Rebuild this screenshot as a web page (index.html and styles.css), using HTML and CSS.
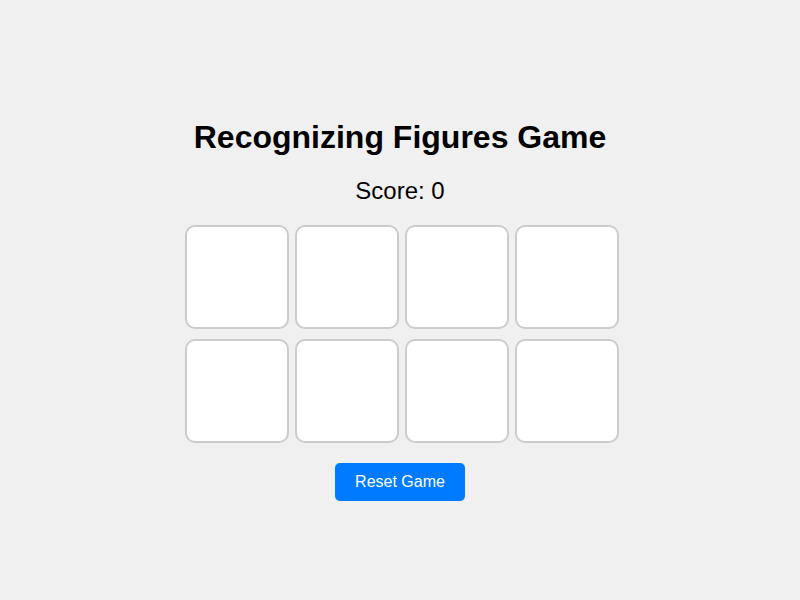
FILE: index.html
```html
<!DOCTYPE html>
<html lang="en">
<head>
<meta charset="utf-8">
<title>Recognizing Figures Game</title>
<link rel="stylesheet" href="styles.css">
</head>
<body>
<main class="game">
  <h1 class="title">Recognizing Figures Game</h1>
  <p class="score">Score: 0</p>
  <div class="board">
    <div class="card"></div>
    <div class="card"></div>
    <div class="card"></div>
    <div class="card"></div>
    <div class="card"></div>
    <div class="card"></div>
    <div class="card"></div>
    <div class="card"></div>
  </div>
  <button class="reset" type="button">Reset Game</button>
</main>
</body>
</html>
```

FILE: styles.css
```css
html, body {
  margin: 0;
  padding: 0;
  height: 100%;
}
body {
  background: #f0f0f0;
  font-family: "Liberation Sans", Arial, sans-serif;
  color: #000;
  display: flex;
  align-items: center;
  justify-content: center;
}
.game {
  display: flex;
  flex-direction: column;
  align-items: center;
  padding-top: 20px;
}
.title {
  font-size: 32px;
  font-weight: bold;
  margin: 0 0 21px;
}
.score {
  font-size: 24px;
  margin: 0 0 20px;
}
.board {
  display: grid;
  grid-template-columns: repeat(4, 100px);
  column-gap: 10px;
  row-gap: 10px;
  margin-bottom: 20px;
}
.card {
  width: 100px;
  height: 100px;
  background: #fff;
  border: 2px solid #ccc;
  border-radius: 10px;
}
.reset {
  width: 130px;
  height: 38px;
  background: #007bff;
  color: #fff;
  border: none;
  border-radius: 5px;
  font-family: "Liberation Sans", Arial, sans-serif;
  font-size: 16px;
  padding: 0;
}
```
